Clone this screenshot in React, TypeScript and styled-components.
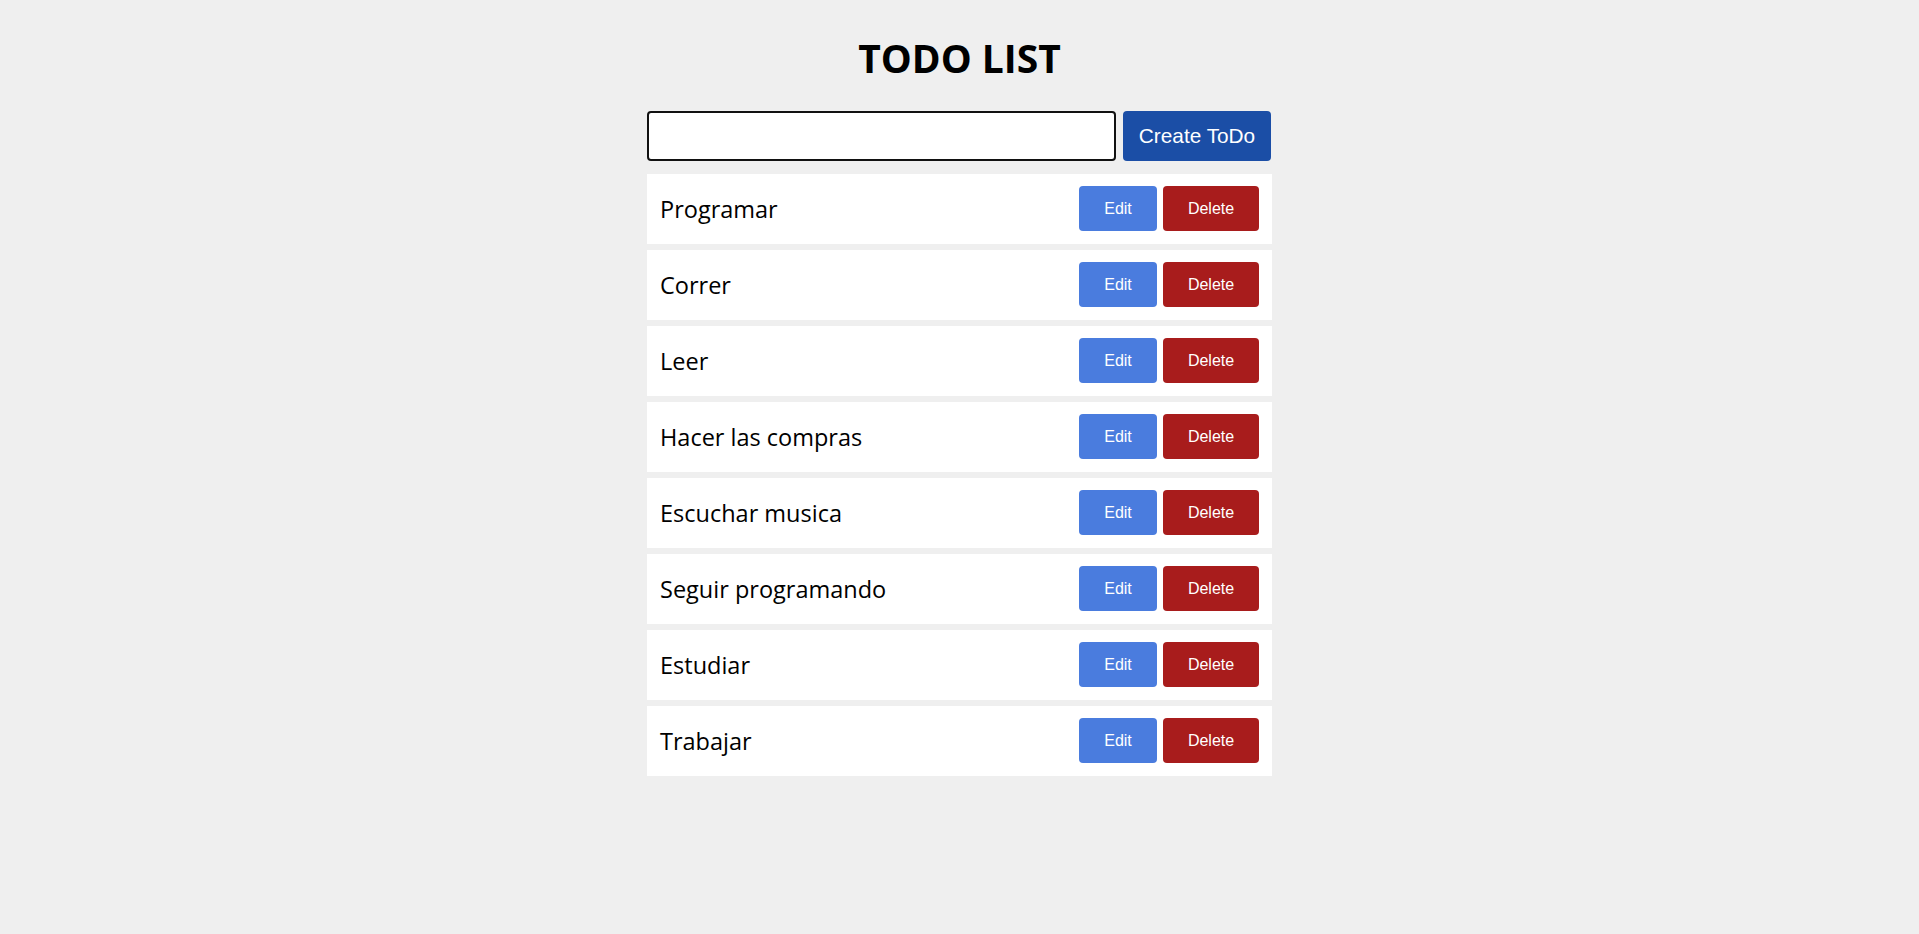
import React, { useState } from "react";
import styled, { createGlobalStyle } from "styled-components";

const GlobalStyle = createGlobalStyle`
  html, body {
    margin: 0;
    padding: 0;
    background: #efefef;
    font-family: "Open Sans", "Liberation Sans", Arial, sans-serif;
  }
  * { box-sizing: border-box; }
`;

const Page = styled.main`
  min-height: 934px;
  padding-top: 38px;
  display: flex;
  flex-direction: column;
  align-items: center;
`;

const Title = styled.h1`
  margin: 0 0 33px;
  font-family: "Open Sans", "Liberation Sans", sans-serif;
  font-weight: 700;
  font-size: 39px;
  line-height: 40px;
  color: #000;
`;

const Container = styled.section`
  width: 625px;
  display: flex;
  flex-direction: column;
  gap: 13px;
`;

const Form = styled.form`
  display: flex;
  gap: 7px;
  height: 50px;
  padding-right: 1px;
`;

const Input = styled.input`
  flex: 1;
  height: 50px;
  border: 2px solid #111;
  border-radius: 4px;
  background: #fff;
  font-size: 18px;
  padding: 0 10px;
  outline: none;
`;

const CreateButton = styled.button`
  width: 148px;
  height: 50px;
  border: none;
  border-radius: 4px;
  background: #1b4ea6;
  color: #fff;
  font-family: "Liberation Sans", Arial, sans-serif;
  font-size: 20.8px;
  cursor: pointer;
  padding: 0;
`;

const List = styled.ul`
  list-style: none;
  margin: 0;
  padding: 0;
  display: flex;
  flex-direction: column;
  gap: 6px;
`;

const Row = styled.li`
  height: 70px;
  background: #fff;
  display: flex;
  align-items: center;
  justify-content: space-between;
  padding: 0 13px 0 13px;
`;

const RowText = styled.span`
  font-family: "Open Sans", sans-serif;
  font-size: 23.5px;
  color: #000;
`;

const Actions = styled.div`
  display: flex;
  gap: 6px;
  margin-top: -1px;
`;

const ActionButton = styled.button<{ $variant: "edit" | "delete" }>`
  height: 45px;
  padding: 0;
  width: ${(p) => (p.$variant === "edit" ? "78px" : "96px")};
  border: none;
  border-radius: 4px;
  background: ${(p) => (p.$variant === "edit" ? "#4a7cde" : "#a81c1c")};
  color: #fff;
  font-family: "Liberation Sans", Arial, sans-serif;
  font-size: 16px;
  cursor: pointer;
`;

const initial = [
  "Programar",
  "Correr",
  "Leer",
  "Hacer las compras",
  "Escuchar musica",
  "Seguir programando",
  "Estudiar",
  "Trabajar",
];

export default function App() {
  const [todos] = useState(initial);
  const [value, setValue] = useState("");
  return (
    <>
      <GlobalStyle />
      <Page>
        <Title>TODO LIST</Title>
        <Container>
          <Form onSubmit={(e) => e.preventDefault()}>
            <Input value={value} onChange={(e) => setValue(e.target.value)} />
            <CreateButton type="submit">Create ToDo</CreateButton>
          </Form>
          <List>
            {todos.map((t) => (
              <Row key={t}>
                <RowText>{t}</RowText>
                <Actions>
                  <ActionButton $variant="edit">Edit</ActionButton>
                  <ActionButton $variant="delete">Delete</ActionButton>
                </Actions>
              </Row>
            ))}
          </List>
        </Container>
      </Page>
    </>
  );
}
